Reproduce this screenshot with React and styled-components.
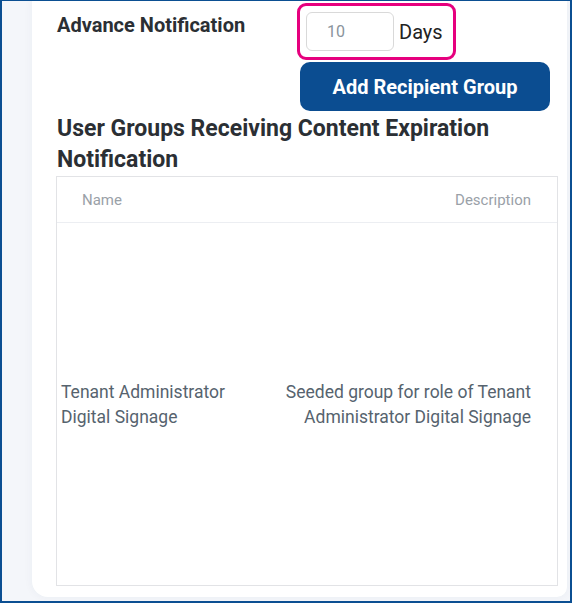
import React from "react";
import styled, { createGlobalStyle } from "styled-components";

const GlobalStyle = createGlobalStyle`
  * { box-sizing: border-box; }
  html, body { margin: 0; padding: 0; background: #ffffff; }
  body { font-family: Roboto, "Liberation Sans", Arial, sans-serif; }
`;

const Frame = styled.div`
  width: 572px;
  height: 603px;
  border: 2px solid #0b4f92;
  border-top-width: 1px;
  background: #f4f6fa;
  padding: 0 3px 4px 30px;
  display: flex;
  overflow: hidden;
`;

const Card = styled.div`
  flex: 1;
  background: #ffffff;
  border-radius: 0 0 10px 16px;
  box-shadow: 0 0 10px rgba(30, 50, 90, 0.05);
  padding: 2px 9px 0 25px;
  display: flex;
  flex-direction: column;
`;

const SettingRow = styled.div`
  display: flex;
  align-items: flex-start;
`;

const Label = styled.div`
  width: 240px;
  margin-top: 10px;
  font-size: 20px;
  font-weight: 700;
  color: #2b2f34;
`;

const Controls = styled.div`
  display: flex;
  flex-direction: column;
  align-items: flex-start;
`;

const Highlight = styled.div`
  display: flex;
  align-items: center;
  gap: 5px;
  border: 3px solid #e6007e;
  border-radius: 9px;
  padding: 6px 10px 6px 6px;
`;

const NumberInput = styled.input`
  width: 88px;
  height: 39px;
  border: 1px solid #d9d9d9;
  border-radius: 6px;
  padding: 0 0 0 20px;
  font-family: inherit;
  font-size: 16px;
  color: #8a949c;
  outline: none;
`;

const Unit = styled.span`
  font-size: 20px;
  color: #222;
`;

const PrimaryButton = styled.button`
  margin: 2px 0 0 3px;
  width: 250px;
  height: 49px;
  border: none;
  border-radius: 10px;
  background: #0b4d91;
  color: #ffffff;
  font-family: inherit;
  font-size: 20px;
  font-weight: 700;
  cursor: pointer;
`;

const Heading = styled.h2`
  margin: 2px 0 1px 0;
  font-size: 23px;
  line-height: 31px;
  font-weight: 700;
  color: #2b2f34;
`;

const Table = styled.div`
  margin-left: -1px;
  height: 410px;
  border: 1px solid #e2e3e6;
  display: flex;
  flex-direction: column;
`;

const HeaderRow = styled.div`
  display: flex;
  justify-content: space-between;
  height: 46px;
  align-items: center;
  padding: 0 26px 0 25px;
  border-bottom: 1px solid #eceef2;
  font-size: 15px;
  color: #9aa1a8;
`;

const BodyRow = styled.div`
  flex: 1;
  display: flex;
  align-items: center;
  padding-top: 1px;
  font-size: 17.5px;
  line-height: 25px;
  color: #56636e;
`;

const NameCell = styled.div`
  width: 200px;
  padding-left: 4px;
`;

const DescCell = styled.div`
  flex: 1;
  text-align: right;
  padding-right: 26px;
`;

export default function App() {
  return (
    <>
      <GlobalStyle />
      <Frame>
        <Card>
          <SettingRow>
            <Label>Advance Notification</Label>
            <Controls>
              <Highlight>
                <NumberInput type="text" defaultValue="10" />
                <Unit>Days</Unit>
              </Highlight>
              <PrimaryButton>Add Recipient Group</PrimaryButton>
            </Controls>
          </SettingRow>
          <Heading>User Groups Receiving Content Expiration Notification</Heading>
          <Table>
            <HeaderRow>
              <span>Name</span>
              <span>Description</span>
            </HeaderRow>
            <BodyRow>
              <NameCell>Tenant Administrator Digital Signage</NameCell>
              <DescCell>Seeded group for role of Tenant Administrator Digital Signage</DescCell>
            </BodyRow>
          </Table>
        </Card>
      </Frame>
    </>
  );
}
